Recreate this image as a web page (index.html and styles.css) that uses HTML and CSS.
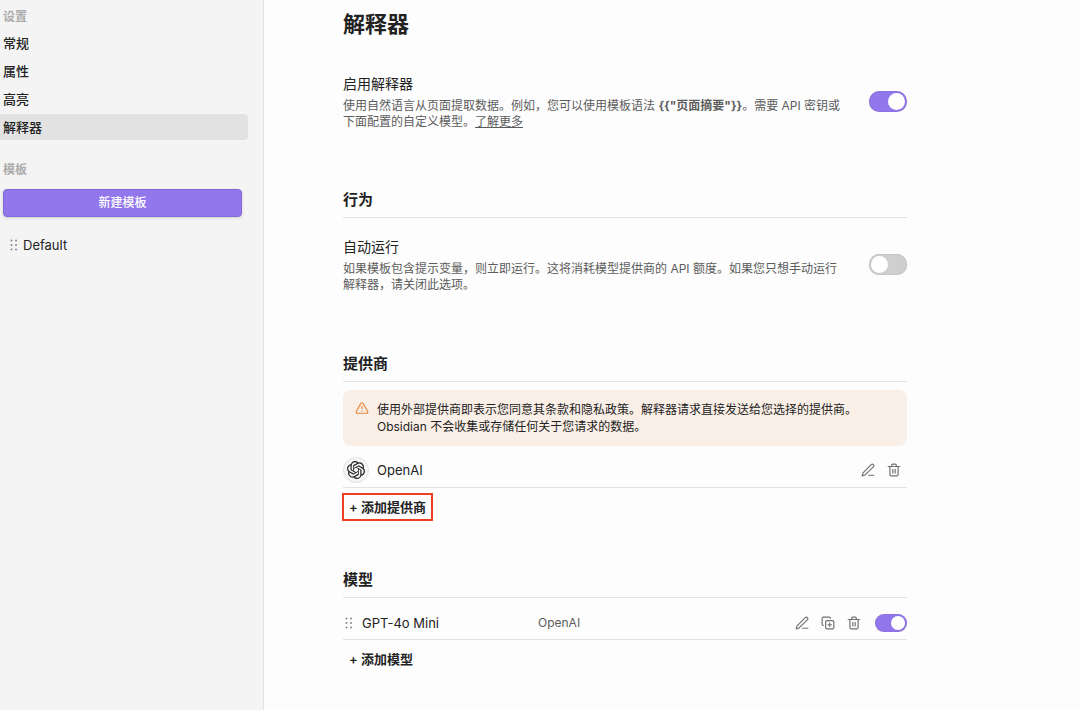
FILE: index.html
```html
<!DOCTYPE html>
<html lang="zh-CN">
<head>
    <meta charset="UTF-8">
    <meta name="viewport" content="width=device-width, initial-scale=1.0">
    <title>设置 - 解释器</title>
    <link rel="stylesheet" href="styles.css">
</head>
<body>
    <!-- Shared icons -->
    <svg class="sprite" aria-hidden="true">
        <symbol id="icon-grip" viewBox="0 0 8 12">
            <g fill="currentColor" stroke="none">
                <circle cx="1.5" cy="1.5" r="1" /><circle cx="6" cy="1.5" r="1" />
                <circle cx="1.5" cy="6" r="1" /><circle cx="6" cy="6" r="1" />
                <circle cx="1.5" cy="10.5" r="1" /><circle cx="6" cy="10.5" r="1" />
            </g>
        </symbol>
        <symbol id="icon-pen" viewBox="0 0 24 24">
            <path d="M13 21h9" />
            <path d="M17.5 2.8a2.6 2.6 0 0 1 3.7 3.7L7 20.5l-5 1.5 1.5-5Z" />
        </symbol>
        <symbol id="icon-copy" viewBox="0 0 24 24">
            <path d="M15 12v6M12 15h6" />
            <rect x="8" y="8" width="14" height="14" rx="2" />
            <path d="M4 16c-1.1 0-2-.9-2-2V4c0-1.1.9-2 2-2h10c1.1 0 2 .9 2 2" />
        </symbol>
        <symbol id="icon-trash" viewBox="0 0 24 24">
            <path d="M2 6h20M19 6v14c0 1-1 2-2 2H7c-1 0-2-1-2-2V6M8 6V4c0-1 1-2 2-2h4c1 0 2 1 2 2v2" />
            <path d="M10 11v6M14 11v6" />
        </symbol>
    </svg>

    <div class="settings">
        <!-- Sidebar -->
        <aside class="sidebar">
            <h2 class="sidebar-title">设置</h2>
            <nav class="sidebar-nav">
                <a href="#general">常规</a>
                <a href="#properties">属性</a>
                <a href="#highlighter">高亮</a>
                <a href="#interpreter" class="active">解释器</a>
            </nav>
            <h2 class="sidebar-title">模板</h2>
            <button class="new-template" type="button">新建模板</button>
            <a class="template-item" href="#default">
                <svg class="grip"><use href="#icon-grip" /></svg>
                <span>Default</span>
            </a>
        </aside>

        <!-- Interpreter settings -->
        <main class="content">
            <h1>解释器</h1>

            <div class="setting">
                <div class="setting-info">
                    <label for="enable-interpreter">启用解释器</label>
                    <p>使用自然语言从页面提取数据。例如，您可以使用模板语法 <strong>{{"页面摘要"}}</strong>。需要 API 密钥或下面配置的自定义模型。<a href="#learn-more">了解更多</a></p>
                </div>
                <input class="toggle" type="checkbox" id="enable-interpreter" checked>
            </div>

            <section>
                <h3>行为</h3>
                <div class="setting">
                    <div class="setting-info">
                        <label for="auto-run">自动运行</label>
                        <p>如果模板包含提示变量，则立即运行。这将消耗模型提供商的 API 额度。如果您只想手动运行解释器，请关闭此选项。</p>
                    </div>
                    <input class="toggle" type="checkbox" id="auto-run">
                </div>
            </section>

            <section>
                <h3>提供商</h3>
                <div class="warning">
                    <svg class="icon" viewBox="0 0 24 24">
                        <path d="m21.73 18-8-14a2 2 0 0 0-3.48 0l-8 14A2 2 0 0 0 4 21h16a2 2 0 0 0 1.73-3Z" />
                        <path d="M12 9v4M12 17h.01" />
                    </svg>
                    <p>使用外部提供商即表示您同意其条款和隐私政策。解释器请求直接发送给您选择的提供商。Obsidian 不会收集或存储任何关于您请求的数据。</p>
                </div>
                <div class="row">
                    <span class="provider-logo">
                        <svg viewBox="0 0 24 24">
                            <path d="M22.2819 9.8211a5.9847 5.9847 0 0 0-.5157-4.9108 6.0462 6.0462 0 0 0-6.5098-2.9A6.0651 6.0651 0 0 0 4.9807 4.1818a5.9847 5.9847 0 0 0-3.9977 2.9 6.0462 6.0462 0 0 0 .7427 7.0966 5.98 5.98 0 0 0 .511 4.9107 6.051 6.051 0 0 0 6.5146 2.9001A5.9847 5.9847 0 0 0 13.2599 24a6.0557 6.0557 0 0 0 5.7718-4.2058 5.9894 5.9894 0 0 0 3.9977-2.9001 6.0557 6.0557 0 0 0-.7475-7.0729zm-9.022 12.6081a4.4755 4.4755 0 0 1-2.8764-1.0408l.1419-.0804 4.7783-2.7582a.7948.7948 0 0 0 .3927-.6813v-6.7369l2.02 1.1686a.071.071 0 0 1 .038.052v5.5826a4.504 4.504 0 0 1-4.4945 4.4944zm-9.6607-4.1254a4.4708 4.4708 0 0 1-.5346-3.0137l.142.0852 4.783 2.7582a.7712.7712 0 0 0 .7806 0l5.8428-3.3685v2.3324a.0804.0804 0 0 1-.0332.0615L9.74 19.9502a4.4992 4.4992 0 0 1-6.1408-1.6464zM2.3408 7.8956a4.485 4.485 0 0 1 2.3655-1.9728V11.6a.7664.7664 0 0 0 .3879.6765l5.8144 3.3543-2.0201 1.1685a.0757.0757 0 0 1-.071 0l-4.8303-2.7865A4.504 4.504 0 0 1 2.3408 7.872zm16.5963 3.8558L13.1038 8.364 15.1192 7.2a.0757.0757 0 0 1 .071 0l4.8303 2.7913a4.4944 4.4944 0 0 1-.6765 8.1042v-5.6772a.79.79 0 0 0-.407-.667zm2.0107-3.0231l-.142-.0852-4.7735-2.7818a.7759.7759 0 0 0-.7854 0L9.409 9.2297V6.8974a.0662.0662 0 0 1 .0284-.0615l4.8303-2.7866a4.4992 4.4992 0 0 1 6.6802 4.66zM8.3065 12.863l-2.02-1.1638a.0804.0804 0 0 1-.038-.0567V6.0742a4.4992 4.4992 0 0 1 7.3757-3.4537l-.142.0805L8.704 5.459a.7948.7948 0 0 0-.3927.6813zm1.0976-2.3654l2.602-1.4998 2.6069 1.4998v2.9994l-2.5974 1.4997-2.6067-1.4997Z" />
                        </svg>
                    </span>
                    <span class="row-name">OpenAI</span>
                    <div class="row-actions provider-actions">
                        <button type="button" aria-label="编辑"><svg class="icon"><use href="#icon-pen" /></svg></button>
                        <button type="button" aria-label="删除"><svg class="icon"><use href="#icon-trash" /></svg></button>
                    </div>
                </div>
                <button class="add-button highlighted" type="button">+ 添加提供商</button>
            </section>

            <section>
                <h3>模型</h3>
                <div class="row model-row">
                    <div class="model-name">
                        <svg class="grip"><use href="#icon-grip" /></svg>
                        <label for="model-enabled">GPT-4o Mini</label>
                    </div>
                    <span class="model-provider">OpenAI</span>
                    <div class="row-actions">
                        <button type="button" aria-label="编辑"><svg class="icon"><use href="#icon-pen" /></svg></button>
                        <button type="button" aria-label="复制"><svg class="icon"><use href="#icon-copy" /></svg></button>
                        <button type="button" aria-label="删除"><svg class="icon"><use href="#icon-trash" /></svg></button>
                        <input class="toggle small" type="checkbox" id="model-enabled" checked>
                    </div>
                </div>
                <button class="add-button" type="button">+ 添加模型</button>
            </section>
        </main>
    </div>
</body>
</html>
```
FILE: styles.css
```css
* {
    box-sizing: border-box;
}

body {
    margin: 0;
    background-color: #fdfdfd;
    color: #222;
    font-family: Inter, "Noto Sans CJK SC", sans-serif;
    font-size: 13px;
    line-height: 16px;
}

h1, h2, h3, p {
    margin: 0;
}

button {
    padding: 0;
    border: none;
    background: none;
    color: inherit;
    font: inherit;
    cursor: pointer;
}

.sprite {
    display: none;
}

.settings {
    display: flex;
    min-height: 100vh;
}

/* Sidebar */
.sidebar {
    flex: 0 0 264px;
    padding: 9px 15px 0 0;
    background-color: #f4f4f4;
    border-right: 1px solid #e0e0e0;
}

.sidebar-title {
    padding-left: 3px;
    color: #ababab;
    font-size: 12px;
    font-weight: 600;
}

.sidebar-nav {
    display: flex;
    flex-direction: column;
    gap: 2px;
    margin: 5px 0 22px;
}

.sidebar-nav a {
    padding: 5px 3px;
    border-radius: 0 4px 4px 0;
    color: #222;
    font-weight: 500;
    text-decoration: none;
}

.sidebar-nav a.active {
    background-color: #e2e2e2;
}

.new-template {
    display: block;
    width: calc(100% - 9px);
    height: 28px;
    margin: 11px 3px 20px;
    border: 1px solid #8468d8;
    border-radius: 4px;
    background-color: #9276ec;
    box-shadow: 0 1px 3px rgba(0, 0, 0, 0.15);
    color: #fff;
    font-size: 12px;
    font-weight: 500;
}

.template-item {
    display: flex;
    align-items: center;
    gap: 5px;
    padding-left: 10px;
    color: #222;
    text-decoration: none;
}

.grip {
    width: 8px;
    height: 12px;
    color: #888;
}

/* Main column */
.content {
    flex: 0 1 644px;
    padding: 8px 1px 24px 79px;
}

h1 {
    margin-bottom: 36px;
    font-size: 22px;
    font-weight: 700;
    line-height: 32px;
}

.setting {
    display: flex;
    align-items: center;
    justify-content: space-between;
    gap: 24px;
    padding-bottom: 10px;
}

.setting label {
    font-size: 14px;
}

.setting-info {
    display: flex;
    flex-direction: column;
    align-items: flex-start;
    gap: 6px;
}

.setting p {
    color: #5c5c5c;
    font-size: 12px;
}

.setting p a {
    color: inherit;
}

section {
    margin-top: 42px;
}

h3 {
    padding: 10px 0 9px;
    border-bottom: 1px solid #e2e2e2;
    font-size: 15px;
    font-weight: 600;
}

section .setting {
    padding: 21px 0 11px;
}

/* Switches */
.toggle {
    flex: none;
    display: flex;
    align-items: center;
    width: 38px;
    height: 21px;
    margin: 0;
    padding: 2px;
    border-radius: 11px;
    background-color: #cfcfcf;
    box-shadow: inset 0 0 1px rgba(0, 0, 0, 0.4);
    appearance: none;
    cursor: pointer;
}

.toggle::before {
    content: "";
    width: 17px;
    height: 17px;
    border-radius: 50%;
    background-color: #fff;
}

.toggle:checked {
    justify-content: flex-end;
    background-color: #9276ec;
}

.setting .toggle {
    margin-bottom: 4px;
}

.toggle.small {
    width: 32px;
    height: 18px;
}

.toggle.small::before {
    width: 14px;
    height: 14px;
}

/* Provider notice */
.warning {
    display: flex;
    gap: 8px;
    margin-top: 8px;
    padding: 11px 12px;
    border-radius: 8px;
    background-color: #faefe7;
    font-size: 12px;
    line-height: 17px;
}

.warning .icon {
    color: #e8873d;
}

.icon {
    flex: none;
    display: block;
    width: 14px;
    height: 14px;
    fill: none;
    stroke: currentColor;
    stroke-width: 2;
    stroke-linecap: round;
    stroke-linejoin: round;
}

/* Provider and model lists */
.row {
    display: flex;
    align-items: center;
    gap: 8px;
    height: 42px;
    padding-top: 7px;
    border-bottom: 1px solid #e2e2e2;
}

.provider-logo {
    display: flex;
    align-items: center;
    justify-content: center;
    width: 26px;
    height: 26px;
    border: 1px solid #e2e2e2;
    border-radius: 50%;
    background-color: #f5f5f5;
}

.provider-logo svg {
    width: 18px;
    height: 18px;
    fill: #222;
}

.row-actions {
    display: flex;
    align-items: center;
    gap: 12px;
    margin-left: auto;
    color: #707070;
}

.provider-actions {
    padding-right: 6px;
}

.row-actions .toggle {
    margin-left: 2px;
}

.model-row {
    display: grid;
    grid-template-columns: 195px 1fr auto;
    gap: 0;
    padding-top: 8px;
}

.model-name {
    display: flex;
    align-items: center;
    gap: 9px;
    padding-left: 2px;
}

.model-provider {
    color: #5c5c5c;
    font-size: 12px;
}

.add-button {
    display: block;
    height: 26px;
    margin-top: 6px;
    padding: 0 6px;
    font-weight: 600;
}

.add-button.highlighted {
    outline: 2px solid #ee4023;
    outline-offset: -1px;
}
```
